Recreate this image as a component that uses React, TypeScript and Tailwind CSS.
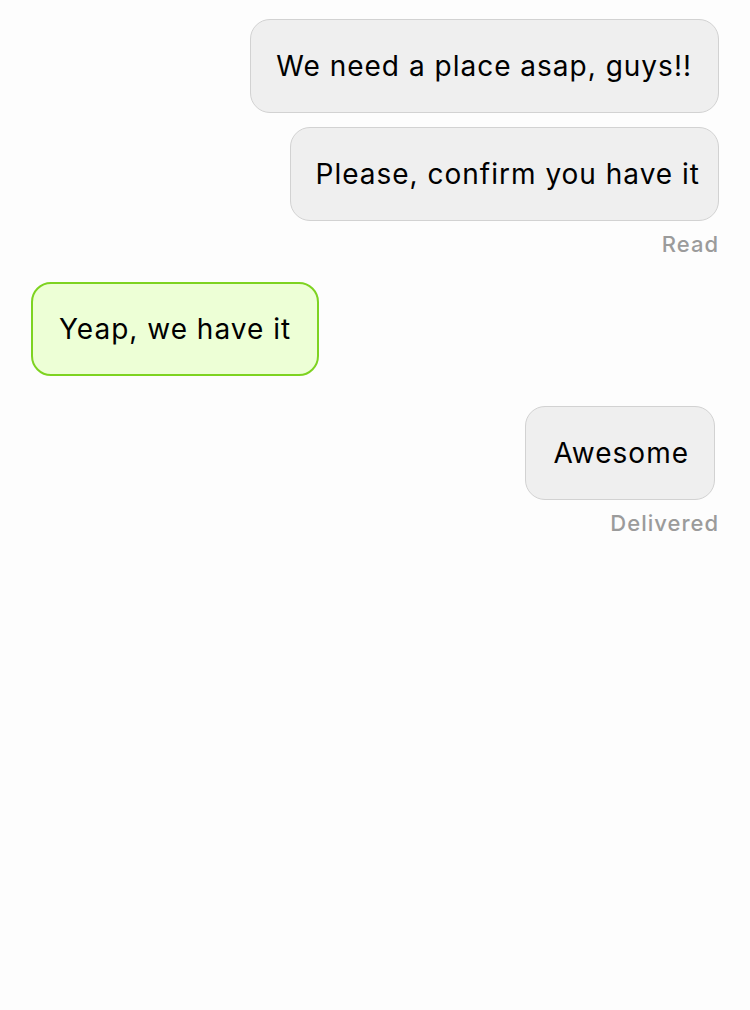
const font = { fontFamily: "Inter, 'Noto Sans', sans-serif" };

type Msg = { text: string; mine: boolean; pad: string; inset?: string };

const messages: Msg[] = [
  { text: "We need a place asap, guys!!", mine: true, pad: "pl-[25px] pr-[26px]" },
  { text: "Please, confirm you have it", mine: true, pad: "pl-[25px] pr-[18px]" },
  { text: "Yeap, we have it", mine: false, pad: "pl-[26px] pr-[26px]" },
  { text: "Awesome", mine: true, pad: "pl-[27px] pr-[25px]", inset: "mr-[4px]" },
];

function Bubble({ m }: { m: Msg }) {
  const base =
    "h-[94px] flex items-center rounded-[20px] text-[28px] tracking-[1px] text-black";
  const look = m.mine
    ? "bg-[#efefef] border-[1.5px] border-[#d2d2d2]"
    : "bg-[#edffd6] border-2 border-[#7ed321]";
  return <div className={`${base} ${look} ${m.pad} ${m.inset ?? ""}`}>{m.text}</div>;
}

function Status({ label }: { label: string }) {
  return (
    <span className="mt-[10px] text-[22px] tracking-[1px] font-medium text-[#9b9b9b] leading-[26px]">
      {label}
    </span>
  );
}

export default function App() {
  return (
    <main className="min-h-[1010px] w-full bg-[#fdfdfd] pt-[19px] px-[31px]" style={font}>
      <div className="flex flex-col items-end gap-[14px]">
        <Bubble m={messages[0]} />
        <div className="flex flex-col items-end">
          <Bubble m={messages[1]} />
          <Status label="Read" />
        </div>
      </div>
      <div className="mt-[25px] flex">
        <Bubble m={messages[2]} />
      </div>
      <div className="mt-[30px] flex flex-col items-end">
        <Bubble m={messages[3]} />
        <Status label="Delivered" />
      </div>
    </main>
  );
}
